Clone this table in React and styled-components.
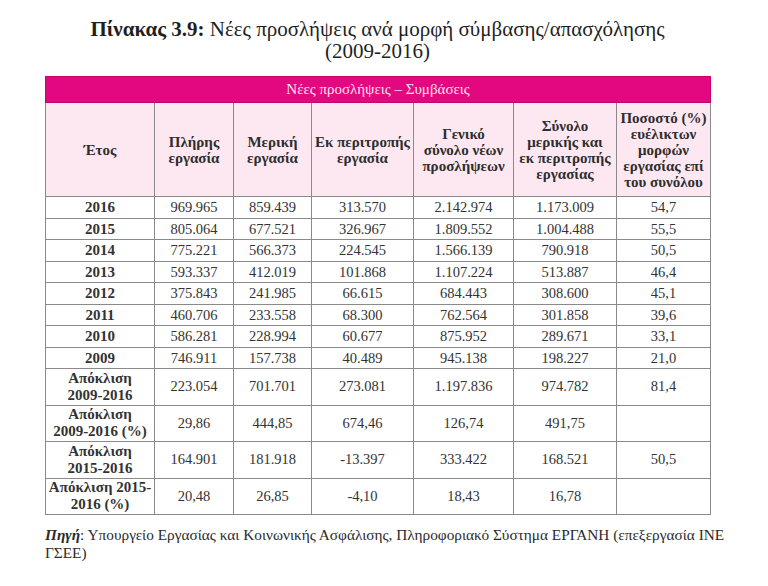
import React from "react";
import styled, { createGlobalStyle } from "styled-components";

const Global = createGlobalStyle`
  html, body { margin: 0; padding: 0; background: #fff; }
  body { font-family: "Liberation Serif", "DejaVu Serif", serif; color: #2b2b2b; }
`;

const Page = styled.div`
  width: 768px;
  padding: 18px 0 0 45px;
  box-sizing: border-box;
`;

const Title = styled.h1`
  width: 665px;
  margin: 0 0 14px 0;
  text-align: center;
  font-family: "Liberation Serif", serif;
  font-weight: normal;
  font-size: 21px;
  line-height: 22px;
  color: #1f1f1f;
`;

const TitleLabel = styled.b`
  font-weight: bold;
`;

const Table = styled.table`
  width: 665px;
  border-collapse: collapse;
  table-layout: fixed;
  font-family: "Liberation Serif", serif;
  font-size: 14.5px;
  color: #333;
`;

const Banner = styled.th`
  background: #e3087f;
  color: #fde3f0;
  font-weight: normal;
  font-size: 15px;
  height: 25px;
  padding: 0;
  border: 1px solid #c2066c;
  text-align: center;
`;

const HeadCell = styled.th`
  background: #fde8f2;
  font-weight: bold;
  font-size: 15px;
  line-height: 16px;
  height: 93px;
  padding: 0 2px;
  border: 1px solid #8a8a8a;
  text-align: center;
  vertical-align: middle;
  color: #2e2e2e;
`;

const Cell = styled.td`
  border: 1px solid #8a8a8a;
  text-align: center;
  vertical-align: middle;
  padding: 0 2px;
  height: ${(p) => (p.$tall ? "35.5px" : "20.5px")};
  line-height: ${(p) => (p.$tall ? "17px" : "20px")};
  font-weight: ${(p) => (p.$bold ? "bold" : "normal")};
  font-size: ${(p) => (p.$bold ? "15px" : "14.5px")};
`;

const Source = styled.p`
  margin: 11px 0 0 0;
  font-family: "Liberation Serif", serif;
  font-size: 15.3px;
  line-height: 18px;
  color: #2b2b2b;
  white-space: nowrap;
`;

const SourceLabel = styled.b`
  font-style: italic;
`;

const cols = [109, 79, 78, 102, 100, 103, 94];

const yearRows = [
  ["2016", "969.965", "859.439", "313.570", "2.142.974", "1.173.009", "54,7"],
  ["2015", "805.064", "677.521", "326.967", "1.809.552", "1.004.488", "55,5"],
  ["2014", "775.221", "566.373", "224.545", "1.566.139", "790.918", "50,5"],
  ["2013", "593.337", "412.019", "101.868", "1.107.224", "513.887", "46,4"],
  ["2012", "375.843", "241.985", "66.615", "684.443", "308.600", "45,1"],
  ["2011", "460.706", "233.558", "68.300", "762.564", "301.858", "39,6"],
  ["2010", "586.281", "228.994", "60.677", "875.952", "289.671", "33,1"],
  ["2009", "746.911", "157.738", "40.489", "945.138", "198.227", "21,0"],
];

const devRows = [
  [["Απόκλιση", "2009-2016"], "223.054", "701.701", "273.081", "1.197.836", "974.782", "81,4"],
  [["Απόκλιση", "2009-2016 (%)"], "29,86", "444,85", "674,46", "126,74", "491,75", ""],
  [["Απόκλιση", "2015-2016"], "164.901", "181.918", "-13.397", "333.422", "168.521", "50,5"],
  [["Απόκλιση 2015-", "2016 (%)"], "20,48", "26,85", "-4,10", "18,43", "16,78", ""],
];

const headers = [
  ["Έτος"],
  ["Πλήρης", "εργασία"],
  ["Μερική", "εργασία"],
  ["Εκ περιτροπής", "εργασία"],
  ["Γενικό", "σύνολο νέων", "προσλήψεων"],
  ["Σύνολο", "μερικής και", "εκ περιτροπής", "εργασίας"],
  ["Ποσοστό (%)", "ευέλικτων", "μορφών", "εργασίας επί", "του συνόλου"],
];

const Lines = ({ lines }) =>
  lines.map((l, i) => (
    <React.Fragment key={i}>
      {i > 0 && <br />}
      {l}
    </React.Fragment>
  ));

export default function App() {
  return (
    <>
      <Global />
      <Page>
        <Title>
          <TitleLabel>Πίνακας 3.9:</TitleLabel> Νέες προσλήψεις ανά μορφή σύμβασης/απασχόλησης
          <br />
          (2009-2016)
        </Title>
        <Table>
          <colgroup>
            {cols.map((w, i) => (
              <col key={i} style={{ width: w }} />
            ))}
          </colgroup>
          <thead>
            <tr>
              <Banner colSpan={7}>Νέες προσλήψεις – Συμβάσεις</Banner>
            </tr>
            <tr>
              {headers.map((h, i) => (
                <HeadCell key={i}>
                  <Lines lines={h} />
                </HeadCell>
              ))}
            </tr>
          </thead>
          <tbody>
            {yearRows.map((r) => (
              <tr key={r[0]}>
                {r.map((v, i) => (
                  <Cell key={i} $bold={i === 0}>
                    {v}
                  </Cell>
                ))}
              </tr>
            ))}
            {devRows.map((r, ri) => (
              <tr key={ri}>
                {r.map((v, i) => (
                  <Cell key={i} $tall $bold={i === 0}>
                    {i === 0 ? <Lines lines={v} /> : v}
                  </Cell>
                ))}
              </tr>
            ))}
          </tbody>
        </Table>
        <Source>
          <SourceLabel>Πηγή</SourceLabel>: Υπουργείο Εργασίας και Κοινωνικής Ασφάλισης, Πληροφοριακό Σύστημα ΕΡΓΑΝΗ (επεξεργασία ΙΝΕ
          <br />
          ΓΣΕΕ)
        </Source>
      </Page>
    </>
  );
}
